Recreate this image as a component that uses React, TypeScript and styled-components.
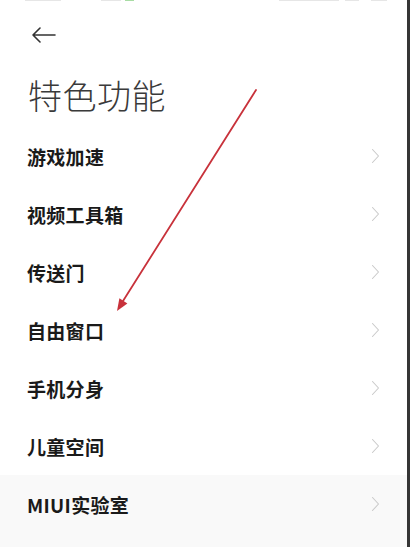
import React from 'react'
import styled, { createGlobalStyle } from 'styled-components'

const GlobalStyle = createGlobalStyle`
  html, body {
    margin: 0;
    padding: 0;
    background: #ffffff;
  }
  body {
    font-family: "Noto Sans CJK SC", "Noto Sans", sans-serif;
  }
`

const items = [
  '游戏加速',
  '视频工具箱',
  '传送门',
  '自由窗口',
  '手机分身',
  '儿童空间',
  'MIUI实验室',
]

const App: React.FC = () => {
  return (
    <Page>
      <GlobalStyle />
      <StatusBar>
        <Bit w={36} />
        <Bit w={20} gap={40} />
        <Bit w={9} gap={4} color="#a8dca4" />
        <StatusSpacer />
        <Bit w={60} />
        <Bit w={14} gap={6} />
        <Bit w={16} gap={12} />
      </StatusBar>
      <BackRow>
        <svg width="26" height="16" viewBox="0 0 26 16">
          <path
            d="M2 8 H24 M9 1 L2 8 L9 15"
            fill="none"
            stroke="#333"
            strokeWidth="1.6"
            strokeLinecap="round"
            strokeLinejoin="round"
          />
        </svg>
      </BackRow>
      <Title>特色功能</Title>
      <List>
        {items.map((label, i) => (
          <Row key={label} active={i === items.length - 1}>
            <Label>{label}</Label>
            <svg width="9" height="16" viewBox="0 0 9 16">
              <path
                d="M1.5 1.5 L7.5 8 L1.5 14.5"
                fill="none"
                stroke="#cacaca"
                strokeWidth="1.1"
                strokeLinecap="round"
                strokeLinejoin="round"
              />
            </svg>
          </Row>
        ))}
      </List>
      <Rest />
      <Annotation width="410" height="547" viewBox="0 0 410 547">
        <line
          x1="256"
          y1="90"
          x2="123"
          y2="301"
          stroke="#c8323b"
          strokeWidth="1.8"
          strokeLinecap="round"
        />
        <polygon points="117,311 127.4,303.4 119.4,298.2" fill="#c8323b" />
      </Annotation>
    </Page>
  )
}

export default App

const Page = styled.div`
  position: relative;
  box-sizing: border-box;
  width: 410px;
  height: 547px;
  overflow: hidden;
  display: flex;
  flex-direction: column;
  border-right: 3px solid #353535;
  background: #fff;
`

const StatusBar = styled.div`
  height: 3px;
  display: flex;
  align-items: flex-start;
  padding: 0 20px 0 25px;
  overflow: hidden;
`

const StatusSpacer = styled.div`
  flex: 1;
`

const Bit = styled.span<{ w: number; gap?: number; color?: string }>`
  display: block;
  width: ${(p) => p.w}px;
  height: 1px;
  margin-left: ${(p) => p.gap || 0}px;
  background: ${(p) => p.color || '#e6e6e6'};
`

const BackRow = styled.div`
  height: 63px;
  display: flex;
  align-items: center;
  padding-left: 31px;
`

const Title = styled.h1`
  margin: 0;
  height: 56px;
  display: flex;
  align-items: center;
  padding-left: 28px;
  font-size: 34px;
  font-weight: 300;
  color: #3a3a3a;
  letter-spacing: 0.5px;
`

const List = styled.div`
  display: flex;
  flex-direction: column;
  padding-top: 5px;
`

const Row = styled.div<{ active?: boolean }>`
  height: 58px;
  flex-shrink: 0;
  display: flex;
  align-items: center;
  justify-content: space-between;
  padding: 0 27px 0 27px;
  background: ${(p) => (p.active ? '#f9f9f9' : 'transparent')};
`

const Label = styled.span`
  font-size: 19px;
  font-weight: 700;
  color: #1a1a1a;
  letter-spacing: 0.3px;
`

const Rest = styled.div`
  flex: 1;
  background: #f9f9f9;
`

const Annotation = styled.svg`
  position: absolute;
  left: 0;
  top: 0;
  pointer-events: none;
`
